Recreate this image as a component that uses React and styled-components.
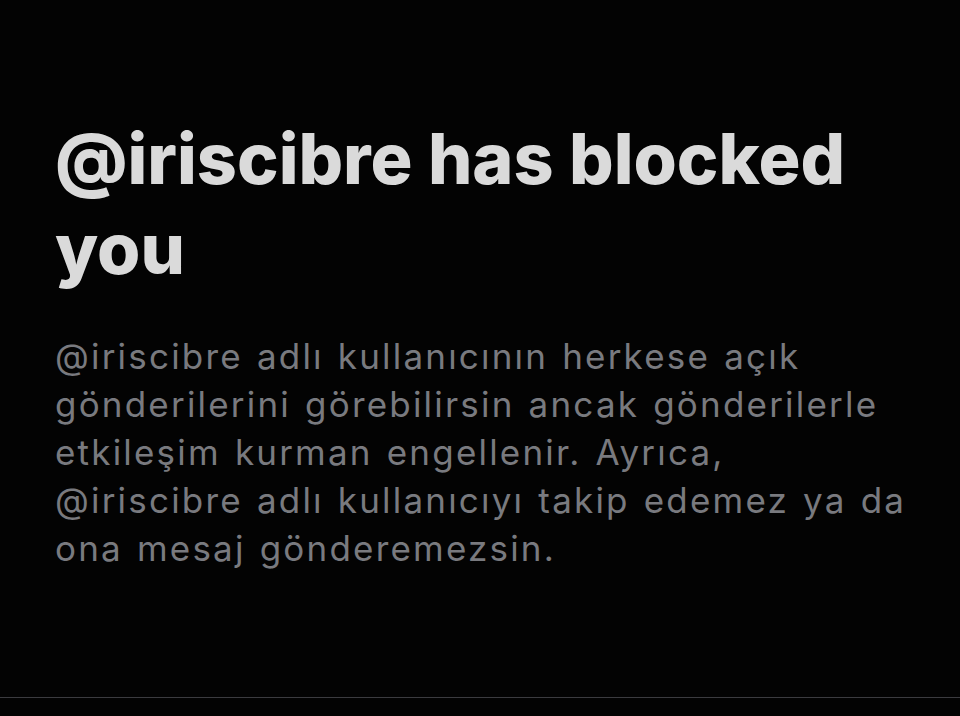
import styled, { createGlobalStyle } from 'styled-components';

const GlobalStyle = createGlobalStyle`
  html, body {
    margin: 0;
    padding: 0;
    background: #030303;
  }
`;

const Screen = styled.div`
  width: 960px;
  height: 716px;
  background: #030303;
  display: flex;
  flex-direction: column;
  overflow: hidden;
`;

const Content = styled.div`
  flex: 1;
  padding: 114px 20px 0 55px;
  font-family: Inter, "Liberation Sans", sans-serif;
`;

const Title = styled.h1`
  margin: 0;
  color: #dadada;
  font-size: 70px;
  font-weight: 800;
  line-height: 90px;
  letter-spacing: 0;
`;

const Message = styled.p`
  margin: 38px 0 0;
  color: #797a7f;
  font-size: 35px;
  font-weight: 400;
  line-height: 48px;
  letter-spacing: 2.2px;
  word-spacing: 2px;
  white-space: nowrap;
`;

const BottomRule = styled.div`
  height: 1px;
  background: #3b3b3f;
  margin-bottom: 18px;
`;

const lines = [
  '@iriscibre adlı kullanıcının herkese açık',
  'gönderilerini görebilirsin ancak gönderilerle',
  'etkileşim kurman engellenir. Ayrıca,',
  '@iriscibre adlı kullanıcıyı takip edemez ya da',
  'ona mesaj gönderemezsin.',
];

export default function App() {
  return (
    <Screen>
      <GlobalStyle />
      <Content>
        <Title>
          @iriscibre has blocked
          <br />
          you
        </Title>
        <Message>
          {lines.map((line, i) => (
            <span key={i}>
              {line}
              {i < lines.length - 1 && <br />}
            </span>
          ))}
        </Message>
      </Content>
      <BottomRule />
    </Screen>
  );
}
